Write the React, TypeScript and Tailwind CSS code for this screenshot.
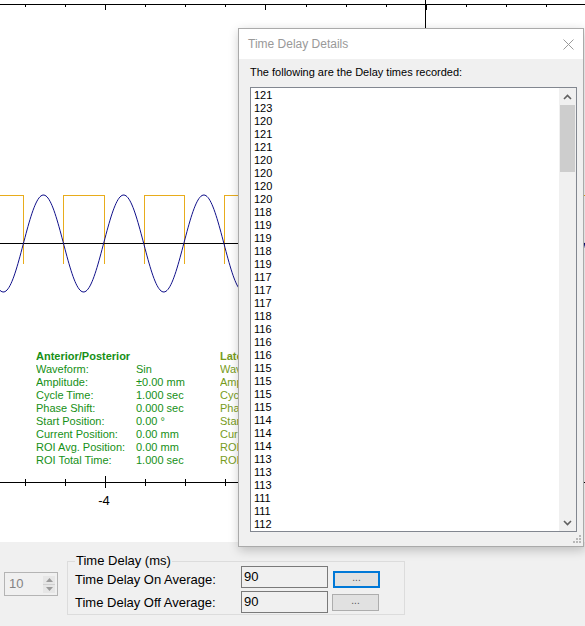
import React from 'react';

const W = 585;
const H = 542;
const PERIOD = 80.2;
const PHASE = 23.4;
const MID = 243.5;
const AMP = 48.5;

const delays = [
  121, 123, 120, 121, 121, 120, 120, 120, 120, 118, 119, 119, 118, 119, 117, 117, 117,
  118, 116, 116, 116, 115, 115, 115, 115, 114, 114, 114, 113, 113, 113, 111, 111, 112,
];

const rows: [string, string][] = [
  ['Waveform:', 'Sin'],
  ['Amplitude:', '±0.00 mm'],
  ['Cycle Time:', '1.000 sec'],
  ['Phase Shift:', '0.000 sec'],
  ['Start Position:', '0.00 °'],
  ['Current Position:', '0.00 mm'],
  ['ROI Avg. Position:', '0.00 mm'],
  ['ROI Total Time:', '1.000 sec'],
];

const sinePath = () => {
  let d = '';
  for (let x = 0; x <= W; x += 1) {
    const y = MID - AMP * Math.sin((2 * Math.PI * (x - PHASE)) / PERIOD);
    d += `${x === 0 ? 'M' : 'L'}${x} ${y.toFixed(2)} `;
  }
  return d;
};

const gatePath = () => {
  let d = '';
  for (let k = 0; k < 9; k++) {
    const a = Math.round(PHASE + PERIOD * k - PERIOD / 2) + 0.5;
    const b = Math.round(PHASE + PERIOD * k) + 0.5;
    if (a < 0) d += `M0 195.5 H${b} V264 `;
    else d += `M${a} 264 V195.5 H${b} V264 `;
  }
  return d;
};

const ticks = Array.from({ length: 15 }, (_, i) => Math.round(24.5 + 40.15 * i) + 0.5);

const Chart: React.FC = () => (
  <svg width={W} height={H} className="absolute inset-0" shapeRendering="crispEdges">
    <line x1={0} y1={4.5} x2={W} y2={4.5} stroke="#000" />
    <line x1={0} y1={482.5} x2={W} y2={482.5} stroke="#000" />
    <line x1={425.5} y1={0} x2={425.5} y2={H} stroke="#000" />
    {ticks.map((x, i) => {
      const major = i % 4 === 2;
      return (
        <g key={x}>
          <line x1={x} y1={4} x2={x} y2={major ? 10 : 7} stroke="#000" />
          <line x1={x} y1={major ? 476 : 479} x2={x} y2={major ? 488 : 486} stroke="#000" />
        </g>
      );
    })}
    <path d={gatePath()} fill="none" stroke="#e8ac1c" />
    <line x1={0} y1={MID} x2={W} y2={MID} stroke="#000" />
    <path d={sinePath()} fill="none" stroke="#10108a" shapeRendering="auto" />
    <text x={104} y={505} fontSize={13} textAnchor="middle" fontFamily="'Liberation Sans', Arial, sans-serif">
      -4
    </text>
  </svg>
);

const InfoBlock: React.FC<{ title: string; color: string; className: string }> = ({ title, color, className }) => (
  <div className={`absolute overflow-hidden text-[11px] leading-[13px] ${color} ${className}`}>
    <div className="font-bold whitespace-nowrap">{title}</div>
    {rows.map(([label, value]) => (
      <div key={label} className="flex whitespace-nowrap">
        <span className="w-[100px] shrink-0">{label}</span>
        <span>{value}</span>
      </div>
    ))}
  </div>
);

const Chevron: React.FC<{ down?: boolean }> = ({ down }) => (
  <svg width="9" height="6" viewBox="0 0 9 6">
    <path
      d={down ? 'M1 1 L4.5 4.5 L8 1' : 'M1 5 L4.5 1.5 L8 5'}
      fill="none"
      stroke="#606060"
      strokeWidth="1.6"
    />
  </svg>
);

const DelayDialog: React.FC = () => (
  <div className="absolute left-[238px] top-[28px] w-[346px] h-[519px] border border-[#aaaaaa] bg-[#f0f0f0] shadow-[1px_3px_10px_rgba(0,0,0,0.22)] flex flex-col">
    <div className="h-[30px] bg-white flex items-center justify-between pl-[9px] pr-[9px]">
      <span className="text-[12px] text-[#999999]">Time Delay Details</span>
      <svg width="11" height="11" viewBox="0 0 11 11">
        <path d="M0.5 0.5 L10.5 10.5 M10.5 0.5 L0.5 10.5" stroke="#9a9a9a" strokeWidth="1" />
      </svg>
    </div>
    <div className="flex flex-col pl-[11px] pr-[6px]">
      <div className="h-[28px] pt-[7px] text-[11px] leading-[13px] text-black">
        The following are the Delay times recorded:
      </div>
      <div className="h-[445px] border border-[#828790] bg-white flex">
        <div className="flex-1 pl-[3px] pt-[1px] overflow-hidden text-[11px] leading-[13px] text-black">
          {delays.map((d, i) => (
            <div key={i}>{d}</div>
          ))}
        </div>
        <div className="w-[17px] bg-[#f0f0f0] flex flex-col">
          <div className="h-[17px] flex items-center justify-center">
            <Chevron />
          </div>
          <div className="h-[67px] mx-[1px] bg-[#cdcdcd]" />
          <div className="flex-1" />
          <div className="h-[17px] flex items-center justify-center">
            <Chevron down />
          </div>
        </div>
      </div>
    </div>
    <svg width="10" height="10" viewBox="0 0 10 10" className="absolute right-[1px] bottom-[2px]">
      {[
        [7, 1],
        [4, 4],
        [7, 4],
        [1, 7],
        [4, 7],
        [7, 7],
      ].map(([x, y]) => (
        <rect key={`${x}-${y}`} x={x} y={y} width="2" height="2" fill="#b8b8b8" />
      ))}
    </svg>
  </div>
);

const SmallButton: React.FC<{ focused?: boolean; className?: string }> = ({ focused, className }) => (
  <div
    className={`w-[47px] h-[17px] flex items-center justify-center bg-[#e1e1e1] text-[10px] leading-none text-[#555] ${
      focused ? 'border-2 border-[#0078d7]' : 'border border-[#adadad]'
    } ${className ?? ''}`}
  >
    <span className="-mt-[3px]">...</span>
  </div>
);

const ReadonlyBox: React.FC<{ value: string }> = ({ value }) => (
  <div className="w-[87px] h-[22px] border border-[#7a7a7a] bg-[#f0f0f0] pl-[2px] pt-[2px] text-[13px] leading-[16px] text-black">
    {value}
  </div>
);

export default function App() {
  return (
    <div className="w-[585px] h-[626px] overflow-hidden bg-[#f0f0f0] font-['Liberation_Sans',Arial,sans-serif] relative">
      <div className="relative h-[542px] bg-white">
        <Chart />
        <InfoBlock title="Anterior/Posterior" color="text-[#169016]" className="left-[36px] top-[350px]" />
        <InfoBlock title="Lateral/Medial" color="text-[#789c1c]" className="left-[220px] top-[350px] w-[18px]" />
      </div>

      <div className="flex items-start">
        {/* spinner */}
        <div className="ml-[4px] mt-[30px] w-[54px] h-[24px] border border-[#b4b4b4] bg-[#f0f0f0] flex items-center">
          <span className="flex-1 pl-[4px] text-[13px] text-[#838383]">10</span>
          <div className="w-[12px] h-[17px] mr-[2px] bg-[#e6e6e6] flex flex-col">
            <div className="flex-1 flex items-center justify-center border-b border-[#d0d0d0]">
              <svg width="7" height="4" viewBox="0 0 7 4">
                <path d="M0 4 L3.5 0 L7 4 Z" fill="#9a9a9a" />
              </svg>
            </div>
            <div className="flex-1 flex items-center justify-center">
              <svg width="7" height="4" viewBox="0 0 7 4">
                <path d="M0 0 L3.5 4 L7 0 Z" fill="#9a9a9a" />
              </svg>
            </div>
          </div>
        </div>

        {/* Time Delay group */}
        <div className="relative ml-[9px] mt-[19px] w-[338px] h-[54px] border border-[#dcdcdc] pl-[7px] pt-[4px]">
          <span className="absolute left-[7px] -top-[9px] px-[1px] bg-[#f0f0f0] text-[13px] leading-[16px] text-black">
            Time Delay (ms)
          </span>
          <div className="flex items-start h-[22px]">
            <span className="w-[166px] pt-[6px] text-[13px] leading-[16px] text-black">Time Delay On Average:</span>
            <ReadonlyBox value="90" />
            <SmallButton focused className="ml-[5px] mt-[5px]" />
          </div>
          <div className="flex items-start h-[22px] mt-[3px]">
            <span className="w-[166px] pt-[4px] text-[13px] leading-[16px] text-black">Time Delay Off Average:</span>
            <ReadonlyBox value="90" />
            <SmallButton className="ml-[4px] mt-[3px]" />
          </div>
        </div>
      </div>

      <DelayDialog />
    </div>
  );
}
